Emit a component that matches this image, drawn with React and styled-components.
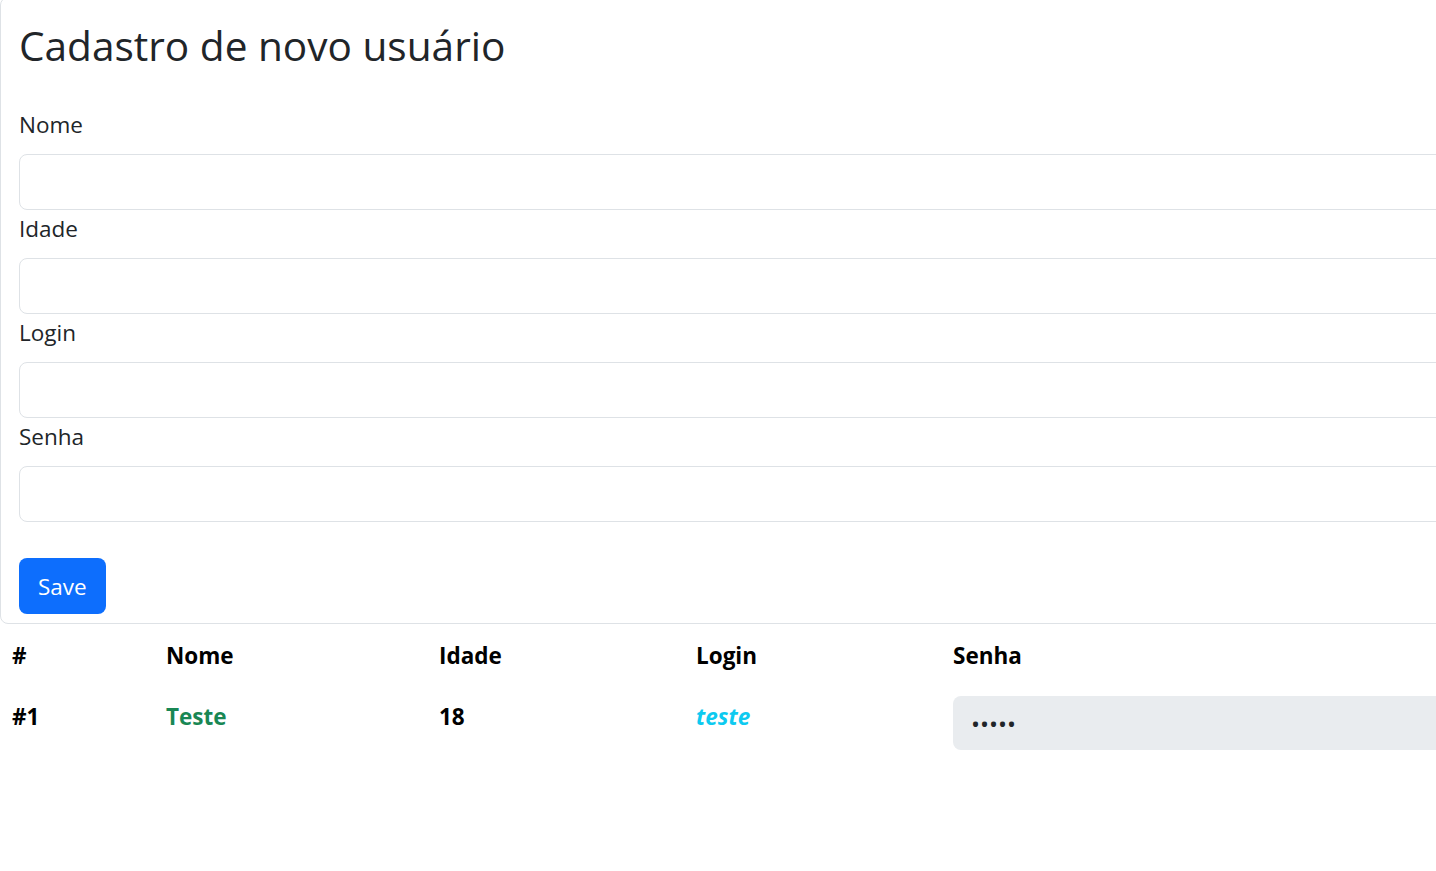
import React from 'react'
import styled, { createGlobalStyle } from 'styled-components'

const GlobalStyle = createGlobalStyle`
    html, body {
        margin: 0;
        padding: 0;
        overflow: hidden;
        background: #fff;
    }
    body {
        font-family: "Open Sans", "Noto Sans", sans-serif;
        color: #212529;
    }
`;

const fields = ['Nome', 'Idade', 'Login', 'Senha'];

const users = [
    { id: 1, nome: 'Teste', idade: 18, login: 'teste', senha: 'teste' },
];

export default function App() {
    return (
        <>
            <GlobalStyle />
            <Page>
                <Card>
                    <Title>Cadastro de novo usuário</Title>
                    <Form onSubmit={e => e.preventDefault()}>
                        {fields.map(f => (
                            <Group key={f}>
                                <Label>{f}</Label>
                                <Input type={f === 'Senha' ? 'password' : 'text'} />
                            </Group>
                        ))}
                        <Button type="submit">Save</Button>
                    </Form>
                </Card>
                <Table>
                    <HeadCell>#</HeadCell>
                    <HeadCell>Nome</HeadCell>
                    <HeadCell>Idade</HeadCell>
                    <HeadCell>Login</HeadCell>
                    <HeadCell>Senha</HeadCell>
                    {users.map(u => (
                        <React.Fragment key={u.id}>
                            <Cell>#{u.id}</Cell>
                            <Cell tone="#198754">{u.nome}</Cell>
                            <Cell>{u.idade}</Cell>
                            <Cell tone="#0dcaf0" italic>{u.login}</Cell>
                            <Cell>
                                <Secret type="password" value={u.senha} readOnly disabled />
                            </Cell>
                        </React.Fragment>
                    ))}
                </Table>
            </Page>
        </>
    )
}

const Page = styled.div`
    width: 1480px;
`;

const Card = styled.div`
    margin-top: -3px;
    border: 1px solid #dee2e6;
    border-radius: 8px;
    padding: 18px 18px 9px 18px;
`;

const Title = styled.h1`
    margin: 4px 0 0 0;
    font-size: 40.6px;
    line-height: 52px;
    font-weight: 500;
    color: #212529;
`;

const Form = styled.form`
    margin-top: 34px;
    display: flex;
    flex-direction: column;
`;

const Group = styled.div`
    display: flex;
    flex-direction: column;
`;

const Label = styled.label`
    font-size: 22.5px;
    line-height: 37px;
    margin-bottom: 11px;
`;

const Input = styled.input`
    box-sizing: border-box;
    width: 100%;
    height: 56px;
    border: 1px solid #dee2e6;
    border-radius: 8px;
    padding: 0 18px;
    font-size: 22px;
    font-family: inherit;
    outline: none;
`;

const Button = styled.button`
    align-self: flex-start;
    margin-top: 36px;
    height: 56px;
    padding: 0 19px;
    border: none;
    border-radius: 8px;
    background: #0d6efd;
    color: #fff;
    font-family: inherit;
    font-size: 22.5px;
    cursor: pointer;
`;

const Table = styled.div`
    display: grid;
    grid-template-columns: 154px 273px 257px 257px 1fr;
    color: #000;
    font-size: 22.5px;
    font-weight: 700;
`;

const HeadCell = styled.div`
    padding: 15px 12px 12px 12px;
    line-height: 34px;
`;

const Cell = styled.div`
    padding: 15px 12px 12px 12px;
    line-height: 34px;
    color: ${p => p.tone || '#000'};
    font-style: ${p => (p.italic ? 'italic' : 'normal')};
`;

const Secret = styled.input`
    box-sizing: border-box;
    width: 100%;
    height: 54px;
    margin-top: -4px;
    border: none;
    border-radius: 8px;
    background: #e9ecef;
    padding: 0 18px;
    font-family: inherit;
    font-size: 24px;
    color: #212529;
    opacity: 1;
`;
